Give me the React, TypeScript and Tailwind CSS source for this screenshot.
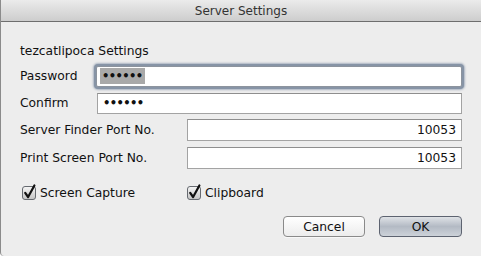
import React from "react";

const font = { fontFamily: '"DejaVu Sans", "Liberation Sans", sans-serif' };

function Check() {
  return (
    <svg width="14" height="14" viewBox="0 0 14 14" className="overflow-visible shrink-0">
      <defs>
        <linearGradient id="cbg" x1="0" y1="0" x2="0" y2="1">
          <stop offset="0" stopColor="#f6f6f6" />
          <stop offset="0.5" stopColor="#dcdcdc" />
          <stop offset="1" stopColor="#c4c4c4" />
        </linearGradient>
      </defs>
      <rect x="0.5" y="0.5" width="13" height="13" rx="2.5" fill="url(#cbg)" stroke="#666a70" />
      <path d="M3.2 6.8 L6.1 11 L12.4 -0.6" fill="none" stroke="#111" strokeWidth="2.2" strokeLinejoin="round" strokeLinecap="round" />
    </svg>
  );
}

export default function App() {
  return (
    <div
      className="w-[481px] h-[256px] bg-[#ededed] border-l border-[#8b8b8b] rounded-bl-[4px] overflow-hidden text-[12.3px] text-[#111] leading-[16px]"
      style={font}
    >
      <div className="h-[22px] bg-gradient-to-b from-[#ebebeb] to-[#cdcdcd] border-b border-[#6e6e6e] flex items-center justify-center text-[12px] text-[#333]">
        Server Settings
      </div>
      <div className="pl-[19px] pr-[19px] flex flex-col">
        <div className="mt-[21px] h-[16px]">tezcatlipoca Settings</div>

        <div className="mt-[6px] h-[22px] flex items-center">
          <div className="w-[76px]">Password</div>
          <div className="flex-1 h-[21px] bg-white border border-[#8d949e] rounded-[2px] shadow-[0_0_0_2px_#8794a6,0_0_2px_3px_#aab4c2] flex items-center pl-[3px]">
            <span className="bg-[#a9a9a9] h-[16px] flex items-center px-[2px] text-[11.5px] tracking-[-0.6px] font-bold">
              ••••••
            </span>
          </div>
        </div>

        <div className="mt-[5px] h-[22px] flex items-center">
          <div className="w-[77px]">Confirm</div>
          <div className="flex-1 h-[21px] bg-white border border-[#a3a3a3] border-t-[#8e8e8e] flex items-center pl-[5px] text-[11.5px] tracking-[-0.6px] font-bold">
            ••••••
          </div>
        </div>

        <div className="mt-[5px] h-[22px] flex items-center">
          <div className="w-[167px]">Server Finder Port No.</div>
          <div className="flex-1 h-[22px] bg-white border border-[#a3a3a3] border-t-[#8e8e8e] flex items-center justify-end pr-[5px]">
            10053
          </div>
        </div>

        <div className="mt-[6px] h-[22px] flex items-center">
          <div className="w-[167px]">Print Screen Port No.</div>
          <div className="flex-1 h-[22px] bg-white border border-[#a3a3a3] border-t-[#8e8e8e] flex items-center justify-end pr-[5px]">
            10053
          </div>
        </div>

        <div className="mt-[17px] h-[14px] flex items-center pl-[2px]">
          <div className="w-[165px] flex items-center gap-[4px]">
            <Check />
            <span>Screen Capture</span>
          </div>
          <div className="flex items-center gap-[4px]">
            <Check />
            <span>Clipboard</span>
          </div>
        </div>

        <div className="mt-[16px] flex justify-end gap-[14px]">
          <button className="w-[82px] h-[21px] rounded-[4px] border border-[#8a8a8a] bg-gradient-to-b from-[#ffffff] to-[#ececec] flex items-center justify-center text-[#111] shadow-[0_1px_0_rgba(255,255,255,0.6)]">
            Cancel
          </button>
          <button className="w-[83px] h-[21px] rounded-[4px] border border-[#5d6370] bg-gradient-to-b from-[#dfe2e6] via-[#b3bac4] to-[#cdd2d9] flex items-center justify-center text-[#111]">
            OK
          </button>
        </div>
      </div>
    </div>
  );
}
